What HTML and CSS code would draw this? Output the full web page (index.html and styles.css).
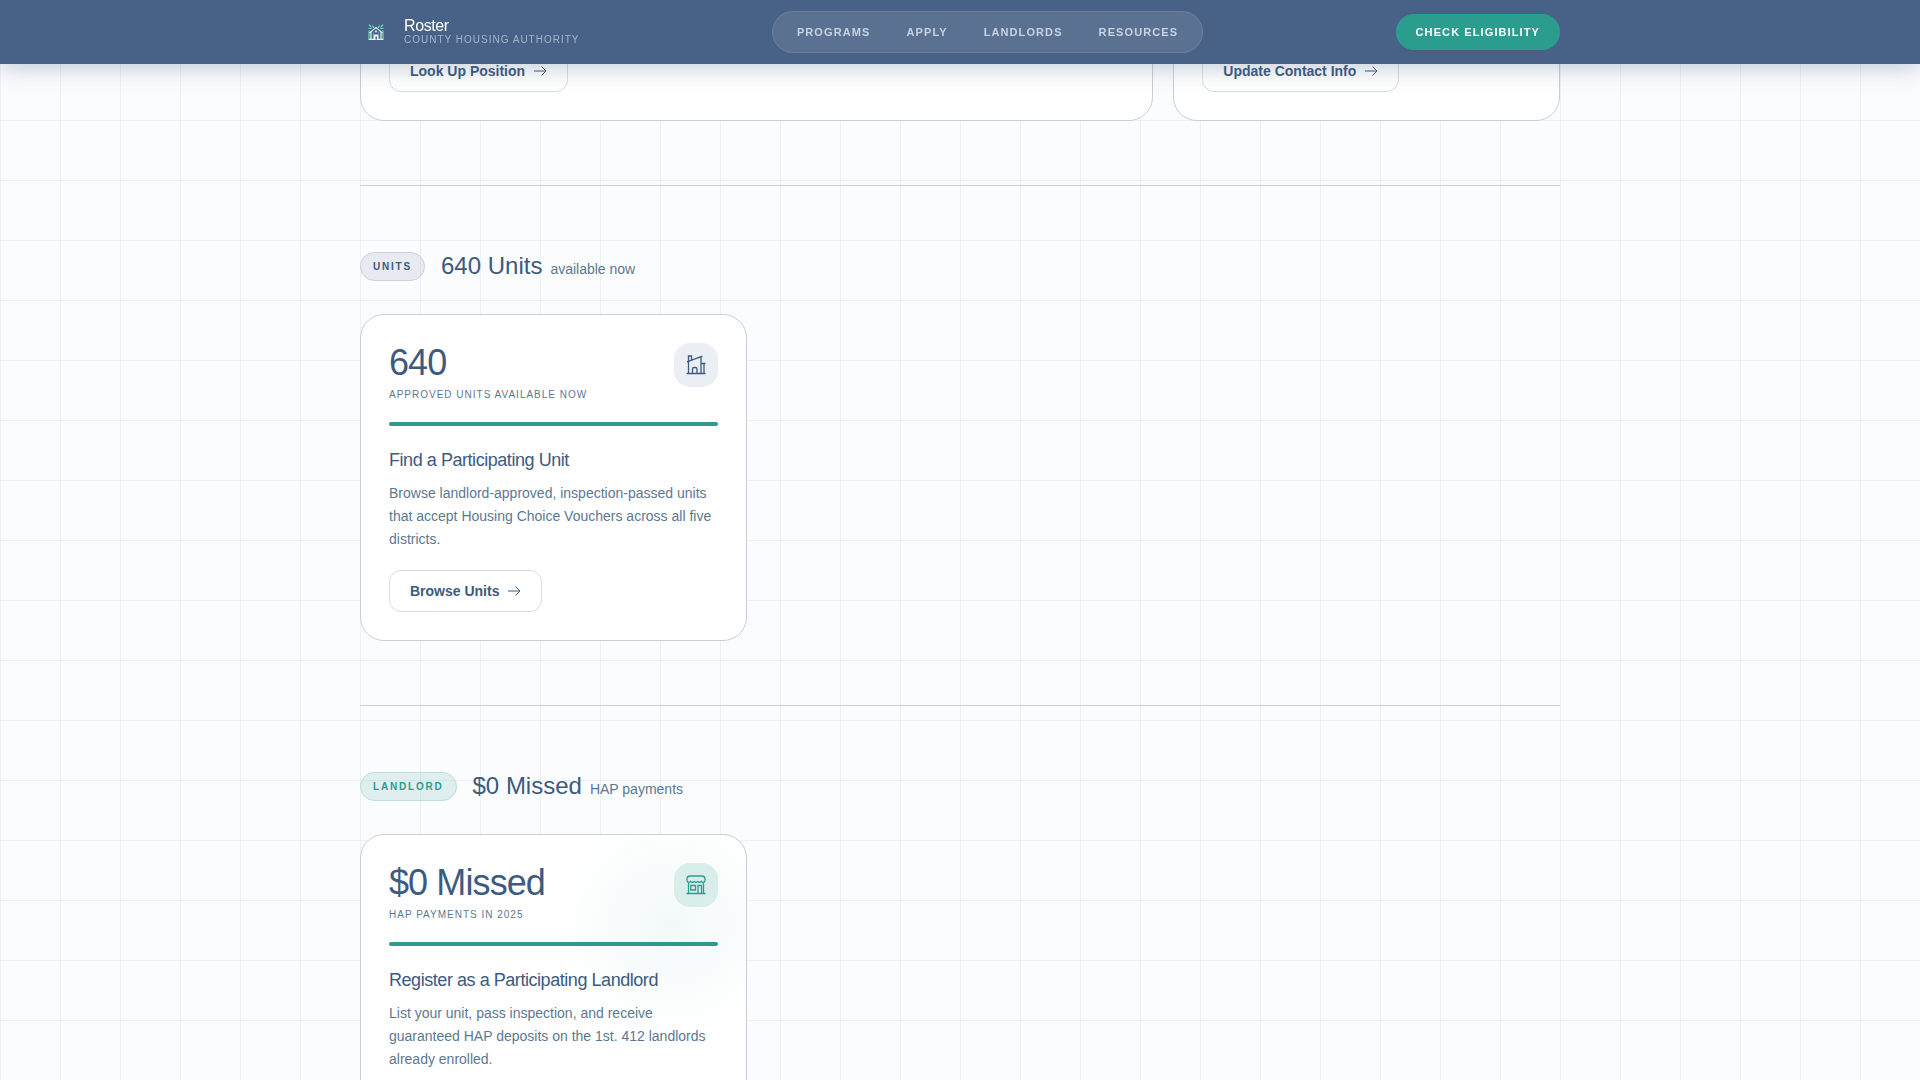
FILE: index.html
```html
<!DOCTYPE html>
<html lang="en">
<head>
  <meta charset="UTF-8" />
  <meta name="viewport" content="width=device-width, initial-scale=1.0"/>
  <title>Roster | County Housing Authority</title>
  <link rel="stylesheet" href="styles.css">
</head>
<body>
  <svg class="sprite" aria-hidden="true">
    <symbol id="arrow" viewBox="0 0 14 14">
      <path d="M1 7h12M8.500 2.500L13 7L8.500 11.500" fill="none" stroke="currentColor" stroke-width="1"/>
    </symbol>
  </svg>

  <header class="header">
    <div class="header-inner">
      <a class="brand" href="#">
        <span class="brand-icon">
          <svg width="16" height="16" viewBox="0 0 16 16" fill="none">
            <path d="M1 .5l2.500 3M15 .5l-2.500 3M.5 4.500h3M12.500 4.500h3M4.500 1.500L6 4M11.500 1.500L10 4M1 6.500V15M15 6.500V15M5 9h1M10 9h1" stroke="#6fd0b8" stroke-width="1.200"/>
            <path d="M1.500 9L8 3.500L14.500 9M3 8.500V15.500M13 8.500V15.500M.5 15.500h15" stroke="#d2f3ea" stroke-width="1.300"/>
            <path d="M5.500 15.500V10.500h5v5z" fill="#f2fcf9"/>
            <path d="M7.500 15.500v-3h1.500v3z" fill="#486186"/>
            <circle cx="8" cy="7.500" r="1" fill="#f2fcf9"/>
          </svg>
        </span>
        <span class="brand-text">
          <span class="brand-name">Roster</span>
          <span class="brand-sub">County Housing Authority</span>
        </span>
      </a>
      <nav class="nav">
        <a href="#">Programs</a>
        <a href="#">Apply</a>
        <a href="#">Landlords</a>
        <a href="#">Resources</a>
      </nav>
      <button class="cta" type="button">Check Eligibility</button>
    </div>
  </header>

  <main class="container">
    <section class="section section-first">
      <div class="grid">
        <article class="card wide">
          <a class="btn" href="#">Look Up Position <svg><use href="#arrow"/></svg></a>
        </article>
        <article class="card">
          <a class="btn" href="#">Update Contact Info <svg><use href="#arrow"/></svg></a>
        </article>
      </div>
    </section>

    <section class="section" id="units">
      <div class="section-head">
        <span class="tag">Units</span>
        <h2>640 Units <small>available now</small></h2>
      </div>
      <div class="grid">
        <article class="card">
          <div class="card-top">
            <div>
              <div class="stat">640</div>
              <div class="stat-label">Approved units available now</div>
            </div>
            <div class="icon-box">
              <svg width="20" height="20" viewBox="0 0 20 20" fill="none" stroke="currentColor" stroke-width="1.300">
                <path d="M.5 18.500h19M2.500 18.500V6M1 6.800L16.500 1.200M2.500 6V1h3v3.800M15 2v16.500M14.500 8.500h5M18 8.500v10M6.500 18.500v-4.500a1.500 1.500 0 0 1 1.500-1.500h1.500a1.500 1.500 0 0 1 1.500 1.500v4.500"/>
              </svg>
            </div>
          </div>
          <div class="bar"></div>
          <h3>Find a Participating Unit</h3>
          <p>Browse landlord-approved, inspection-passed units that accept Housing Choice Vouchers across all five districts.</p>
          <a class="btn" href="#">Browse Units <svg><use href="#arrow"/></svg></a>
        </article>
      </div>
    </section>

    <section class="section" id="landlord">
      <div class="section-head">
        <span class="tag tag-teal">Landlord</span>
        <h2>$0 Missed <small>HAP payments</small></h2>
      </div>
      <div class="grid">
        <article class="card card-glow">
          <div class="card-top">
            <div>
              <div class="stat">$0 Missed</div>
              <div class="stat-label">HAP payments in 2025</div>
            </div>
            <div class="icon-box icon-teal">
              <svg width="20" height="20" viewBox="0 0 20 20" fill="none" stroke="currentColor" stroke-width="1.300">
                <path d="M.5 18.500h19M2.500 7.500v11M17.500 7.500v11"/>
                <path d="M4 1h12a3 3 0 0 1 3 3v1.500q0 1.800-1.800 1.800t-1.800-.8q-1.800 1.600-3.600 0q-1.800 1.600-3.600 0q-1.800 1.600-3.600 0q0 .8-1.800.8T1 5.500V4a3 3 0 0 1 3-3z"/>
                <path d="M4.800 10.500h4.700v4.500H4.800zM12 18.500v-8h3.500v8"/>
              </svg>
            </div>
          </div>
          <div class="bar"></div>
          <h3>Register as a Participating Landlord</h3>
          <p>List your unit, pass inspection, and receive guaranteed HAP deposits on the 1st. 412 landlords already enrolled.</p>
        </article>
      </div>
    </section>
  </main>
</body>
</html>
```
FILE: styles.css
```css
* {
  box-sizing: border-box;
  margin: 0;
  padding: 0;
}
body {
  height: 100vh;
  overflow: hidden;
  font-family: "Liberation Sans", Arial, sans-serif;
  color: #3d5a80;
  background-color: #fbfcfe;
  background-image:
    linear-gradient(rgba(61, 90, 128, 0.07) 1px, transparent 1px),
    linear-gradient(90deg, rgba(61, 90, 128, 0.07) 1px, transparent 1px);
  background-size: 60px 60px;
}
a {
  color: inherit;
  text-decoration: none;
}
.sprite {
  display: none;
}

/* header */
.header {
  position: fixed;
  top: 0;
  left: 0;
  right: 0;
  z-index: 10;
  height: 64px;
  background: #486186;
  box-shadow: 0 4px 24px rgba(61, 90, 128, 0.3);
}
.header-inner {
  max-width: 1200px;
  height: 100%;
  margin: 0 auto;
  display: flex;
  align-items: center;
  justify-content: space-between;
}
.brand {
  display: flex;
  align-items: center;
  gap: 12px;
}
.brand-icon {
  width: 32px;
  height: 32px;
  display: flex;
  align-items: center;
  justify-content: center;
}
.brand-text {
  display: flex;
  flex-direction: column;
}
.brand-name {
  font-size: 16px;
  line-height: 16px;
  letter-spacing: -0.025em;
  color: #fff;
}
.brand-sub {
  font-size: 10px;
  line-height: 12px;
  letter-spacing: 0.1em;
  text-transform: uppercase;
  color: #a4b4cc;
}
.nav {
  display: flex;
  padding: 6px;
  border: 1px solid rgba(255, 255, 255, 0.1);
  border-radius: 24px;
  background: rgba(255, 255, 255, 0.1);
}
.nav a {
  padding: 8px 18px;
  font-size: 11px;
  font-weight: bold;
  line-height: 12px;
  letter-spacing: 0.1em;
  text-transform: uppercase;
  color: #c8d2e1;
}
.cta {
  height: 36px;
  padding: 0 20px;
  border: none;
  border-radius: 18px;
  background: #2a9d8f;
  color: #fff;
  font: bold 11px "Liberation Sans", Arial, sans-serif;
  letter-spacing: 0.1em;
  text-transform: uppercase;
  cursor: pointer;
}

/* sections */
.container {
  max-width: 1200px;
  margin: 0 auto;
}
.section {
  padding: 64px 0;
  border-bottom: 1px solid #c8cfd6;
}
.section-first {
  padding-top: 21px;
}
.section-head {
  display: flex;
  align-items: center;
  gap: 16px;
  margin-bottom: 32px;
}
.section-head h2 {
  display: flex;
  align-items: baseline;
  gap: 8px;
  font-size: 24px;
  font-weight: normal;
  line-height: 32px;
}
.section-head small {
  font-size: 14px;
  line-height: 16px;
  color: #5c7891;
}
.tag {
  padding: 8px 12px;
  border: 1px solid #c9d1dc;
  border-radius: 15px;
  background: rgba(61, 90, 128, 0.1);
  font-size: 10px;
  font-weight: bold;
  line-height: 11px;
  letter-spacing: 0.18em;
  text-transform: uppercase;
}
.tag-teal {
  border-color: #bcdfda;
  background: rgba(42, 157, 143, 0.13);
  color: #2a9d8f;
}

/* cards */
.grid {
  display: grid;
  grid-template-columns: repeat(3, 1fr);
  gap: 20px;
}
.card {
  padding: 28px;
  border: 1px solid #c8cfd6;
  border-radius: 24px;
  background: #fff;
}
.wide {
  grid-column: span 2;
}
.card-glow {
  background: radial-gradient(circle at 310px 90px, rgba(42, 157, 143, 0.06), transparent 115px) #fff;
}
.card-top {
  display: flex;
  justify-content: space-between;
  align-items: flex-start;
  margin-bottom: 21px;
}
.stat {
  font-size: 36px;
  line-height: 40px;
  letter-spacing: -0.025em;
}
.stat-label {
  margin-top: 6px;
  font-size: 10px;
  line-height: 12px;
  letter-spacing: 0.1em;
  text-transform: uppercase;
  color: #5c7891;
}
.icon-box {
  width: 44px;
  height: 44px;
  display: flex;
  align-items: center;
  justify-content: center;
  border-radius: 16px;
  background: #ebeef2;
}
.icon-teal {
  background: #d9eeea;
  color: #2a9d8f;
}
.bar {
  height: 4px;
  margin-bottom: 22px;
  border-radius: 2px;
  background: #2f9a8b;
}
.card h3 {
  margin-bottom: 10px;
  font-size: 18px;
  font-weight: normal;
  line-height: 24px;
  letter-spacing: -0.025em;
}
.card p {
  margin-bottom: 19px;
  font-size: 14px;
  line-height: 23px;
  color: #5c7891;
}
.btn {
  display: inline-flex;
  align-items: center;
  gap: 8px;
  height: 42px;
  padding: 0 20px;
  border: 1px solid #d8dde5;
  border-radius: 12px;
  font-size: 14px;
  font-weight: bold;
  vertical-align: top;
}
.btn svg {
  width: 14px;
  height: 14px;
}
```
